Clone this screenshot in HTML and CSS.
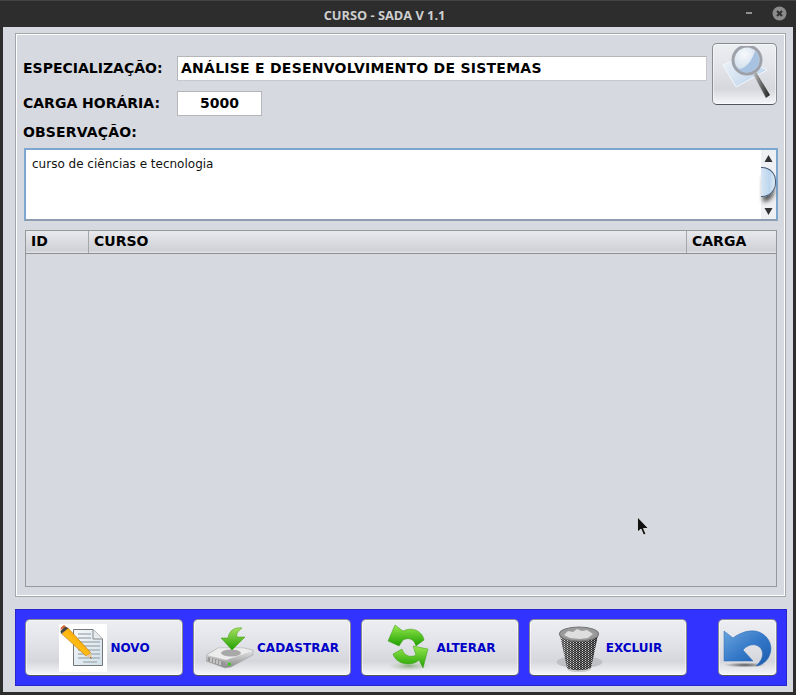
FILE: index.html
```html
<!DOCTYPE html>
<html lang="pt">
<head>
<meta charset="utf-8">
<title>CURSO - SADA V 1.1</title>
<link rel="stylesheet" href="styles.css">
</head>
<body>
<div class="window">
  <header class="titlebar">
    <span class="title">CURSO - SADA V 1.1</span>
    <span class="minimize"></span>
    <span class="close">
      <svg width="15" height="15" viewBox="0 0 15 15"><circle cx="7.5" cy="7.5" r="7" fill="#8b8b8b"/><path d="M5 5l5 5M10 5l-5 5" stroke="#2e2e2e" stroke-width="2"/></svg>
    </span>
  </header>
  <main class="client">
    <section class="panel">
      <div class="top">
        <div class="fields">
          <div class="row row-esp">
            <label class="label">ESPECIALIZAÇÃO:</label>
            <div class="input input-wide">ANÁLISE E DESENVOLVIMENTO DE SISTEMAS</div>
          </div>
          <div class="row row-carga">
            <label class="label">CARGA HORÁRIA:</label>
            <div class="input input-short">5000</div>
          </div>
        </div>
        <button class="btn search">
          <svg width="56" height="56" viewBox="0 0 56 56">
            <defs>
              <linearGradient id="pg" x1="0" y1="0" x2="1" y2="1"><stop offset="0" stop-color="#eef2f8"/><stop offset=".6" stop-color="#d0e0f0"/><stop offset="1" stop-color="#90c2ec"/></linearGradient>
              <radialGradient id="gl" cx=".4" cy=".3" r=".8"><stop offset="0" stop-color="#f6f9fc"/><stop offset=".6" stop-color="#d6e2ee"/><stop offset="1" stop-color="#a8c2de"/></radialGradient>
              <linearGradient id="hd" x1="0" y1="0" x2="1" y2="0"><stop offset="0" stop-color="#c4c4c4"/><stop offset=".5" stop-color="#666"/><stop offset="1" stop-color="#222"/></linearGradient>
            </defs>
            <path d="M6 19L24 11 50 24 19 41Z" fill="url(#pg)" stroke="#f4f6fa"/>
            <circle cx="30" cy="14" r="14" fill="url(#gl)" stroke="#9da2aa" stroke-width="3"/>
            <path d="M38 5a12 12 0 0 1 0 18 12 12 0 0 1-17 0c7 1 14-8 17-18z" fill="#a8c2e2"/>
            <path d="M36 28l3-2 14 23-4 3z" fill="url(#hd)"/>
          </svg>
        </button>
      </div>
      <div class="obs-label label">OBSERVAÇÃO:</div>
      <div class="textarea">
        <div class="textarea-text">curso de ciências e tecnologia</div>
        <div class="scrollbar">
          <svg class="arrow" width="9" height="9" viewBox="0 0 9 9"><path d="M4.5 1L8.5 8H.5Z" fill="#333"/></svg>
          <div class="thumb"></div>
          <svg class="arrow" width="9" height="9" viewBox="0 0 9 9"><path d="M4.5 8L.5 1H8.5Z" fill="#333"/></svg>
        </div>
      </div>
      <div class="table">
        <div class="thead">
          <div class="th th-id">ID</div>
          <div class="th th-curso">CURSO</div>
          <div class="th th-carga">CARGA</div>
        </div>
      </div>
    </section>
    <footer class="toolbar">
      <button class="btn action">
        <svg class="icon icon-white" width="48" height="48" viewBox="0 0 48 48">
          <defs><linearGradient id="doc" x1="0" y1="0" x2="1" y2="1"><stop offset="0" stop-color="#f6f8fa"/><stop offset="1" stop-color="#cfe0ea"/></linearGradient>
          <linearGradient id="pen" x1="0" y1="1" x2="1" y2="0"><stop offset="0" stop-color="#ffd040"/><stop offset=".5" stop-color="#ffb810"/><stop offset="1" stop-color="#e88800"/></linearGradient></defs>
          <path d="M14.500 5.500H34L43.500 15V41.500H14.500Z" fill="url(#doc)" stroke="#777"/>
          <path d="M34 5.500V15H43.500" fill="#e6ebef" stroke="#888"/>
          <path d="M19 10H32M19 14H32M19 18H41M19 22H41M19 26H41M19 30H41M19 34H41M24 38H38" stroke="#aab2b8" stroke-width="1.500"/>
          <path d="M3 10L9 4 32 29 27 32Z" fill="url(#pen)" stroke="#b87000" stroke-width=".6"/>
          <path d="M27 32L32 29 33 34.500Z" fill="#e8c89a"/>
          <path d="M31.500 33L33 34.500 31 34Z" fill="#502000"/>
          <path d="M2 10L1.500 7 6 2.500 9.500 4Z" fill="#444"/>
          <path d="M1.500 6L2 3.500 5 1 7 2.500Z" fill="#d86030"/>
        </svg>
        <span>NOVO</span>
      </button>
      <button class="btn action">
        <svg class="icon" width="48" height="48" viewBox="0 0 48 48">
          <defs><linearGradient id="drv" x1="0" y1="0" x2="0" y2="1"><stop offset="0" stop-color="#f2f2f2"/><stop offset="1" stop-color="#888"/></linearGradient>
          <linearGradient id="ga" x1="0" y1="0" x2="0" y2="1"><stop offset="0" stop-color="#a8e060"/><stop offset="1" stop-color="#20a000"/></linearGradient></defs>
          <path d="M0 31L12 24H38L47 26V31L25 43 19 44 0 37Z" fill="url(#drv)" stroke="#a8a8a8" stroke-width=".6"/>
          <path d="M1 31L20 36 46 27 37 24.500H13Z" fill="#ececec"/>
          <ellipse cx="25" cy="29" rx="10" ry="3.500" fill="#a8a8a8"/>
          <path d="M2 33L19 38V43L2 37Z" fill="#969696"/>
          <path d="M5 34V38M8 35V39M11 36V40M14 37V41" stroke="#eee"/>
          <circle cx="23.500" cy="40" r="1.600" fill="#30d010"/>
          <path d="M36 4C28 3 23 7 22 14H15L26 26 39 13H31C30 10 32 7 36 4Z" fill="url(#ga)" stroke="#3a9a10" stroke-width=".5"/>
        </svg>
        <span>CADASTRAR</span>
      </button>
      <button class="btn action">
        <svg class="icon" width="48" height="48" viewBox="0 0 48 48">
          <defs><linearGradient id="gr1" x1="0" y1="0" x2="0" y2="1"><stop offset="0" stop-color="#98e850"/><stop offset="1" stop-color="#1ea000"/></linearGradient>
          <radialGradient id="grs"><stop offset="0" stop-color="#8fae80"/><stop offset="1" stop-color="#c0c8c0" stop-opacity="0"/></radialGradient></defs>
          <ellipse cx="24" cy="42" rx="21" ry="5" fill="url(#grs)"/>
          <path d="M10 1L3 17 14 22 18 16C24 13 29 15 31 22L39 16C38 8 28 2 18 7Z" fill="url(#gr1)" stroke="#3a9a10" stroke-width=".5"/>
          <path d="M28 22L43 25 38 44 34 36C28 42 12 42 8 30L17 25C19 32 26 34 31 31Z" fill="url(#gr1)" stroke="#3a9a10" stroke-width=".5"/>
        </svg>
        <span>ALTERAR</span>
      </button>
      <button class="btn action">
        <svg class="icon" width="48" height="48" viewBox="0 0 48 48">
          <defs>
            <pattern id="mesh" width="3" height="2" patternUnits="userSpaceOnUse"><rect width="3" height="2" fill="#262626"/><rect width="1" height="1" fill="#d0d0d0"/><rect x="1.500" y="1" width="1" height="1" fill="#a8a8a8"/></pattern>
            <linearGradient id="trs" x1="0" y1="0" x2="1" y2="0"><stop offset="0" stop-color="#fff" stop-opacity=".2"/><stop offset=".5" stop-color="#fff" stop-opacity="0"/><stop offset="1" stop-color="#000" stop-opacity=".2"/></linearGradient>
          </defs>
          <ellipse cx="24.500" cy="38" rx="23" ry="6" fill="#bfc1c6"/>
          <path d="M5 11L12 44C16 48 31 48 36 44L43 11Z" fill="url(#mesh)"/>
          <path d="M5 11L12 44C16 48 31 48 36 44L43 11Z" fill="url(#trs)"/>
          <ellipse cx="24" cy="10" rx="19.500" ry="7" fill="#9a9a9a" stroke="#777" stroke-width="1.200"/>
          <path d="M9 11l4-4 5 1 4-3 5 2 5-1 6 4-5 4-8 1-10-1Z" fill="#dedede"/>
          <path d="M12 44C16 47 31 47 36 44L35.500 46C30 49 17 49 12.500 46Z" fill="#ccc"/>
        </svg>
        <span>EXCLUIR</span>
      </button>
      <button class="btn back">
        <svg width="50" height="48" viewBox="0 0 50 48">
          <defs><linearGradient id="bl" x1="0" y1="0" x2="1" y2="1"><stop offset="0" stop-color="#6aa4dc"/><stop offset=".5" stop-color="#3478c8"/><stop offset="1" stop-color="#1a5cae"/></linearGradient>
          <radialGradient id="sh"><stop offset="0" stop-color="#555"/><stop offset="1" stop-color="#666" stop-opacity="0"/></radialGradient></defs>
          <ellipse cx="22" cy="41" rx="21" ry="2.500" fill="url(#sh)"/>
          <path d="M1 7L10 14C18 8 28 5 36 8 46 12 50 22 47 30 45 37 39 41 33 42 37 38 41 33 39 27 37 20 27 18 20 26L30 37H1Z" fill="url(#bl)" stroke="#2a68b4" stroke-width=".5"/>
        </svg>
      </button>
    </footer>
  </main>
  <svg class="cursor" width="14" height="21" viewBox="0 0 14 21"><path d="M1.500 1V16L5 13 7.500 19 10 18 7.500 12.500H12.500Z" fill="#111" stroke="#eee" stroke-width=".8"/></svg>
</div>
</body>
</html>
```
FILE: styles.css
```css
* { box-sizing: border-box; }
html, body { margin: 0; padding: 0; }
body { width: 796px; height: 695px; background: #2d2d2d; overflow: hidden; font-family: "DejaVu Sans", sans-serif; }
.window { position: relative; width: 796px; height: 695px; display: flex; flex-direction: column; padding: 0 3px 3px; border-top: 1px solid #444; }
.titlebar { position: relative; height: 26px; flex: none; display: flex; align-items: center; justify-content: center; }
.title { font: bold 12.8px "Open Sans", sans-serif; color: #cfcfcf; margin-top: 2px; margin-right: 27px; }
.minimize { position: absolute; left: 743px; top: 11px; width: 6px; height: 2px; background: #8f8f8f; }
.close { position: absolute; left: 769px; top: 5px; height: 15px; }
.client { flex: 1; background: #d6d9df; padding: 6px 6px 6px 12px; display: flex; flex-direction: column; }
.panel { height: 564px; width: 771px; flex: none; border: 1px solid #a4a6aa; box-shadow: inset 0 0 0 1px #fff; padding: 8px 7px 0 7px; }
.top { display: flex; justify-content: space-between; height: 64px; }
.fields { display: flex; flex-direction: column; }
.row { display: flex; align-items: center; }
.row-esp { margin-top: 14px; }
.row-carga { margin-top: 10px; }
.label { width: 154px; font-size: 14px; font-weight: bold; color: #000; white-space: nowrap; padding-bottom: 2px; }
.input { height: 25px; background: #fff; border: 1px solid #b4b6ba; font-size: 14px; font-weight: bold; color: #000; display: flex; align-items: center; padding-bottom: 2px; }
.input-wide { width: 530px; padding-left: 3px; border-right-color: #c8c8cc; border-bottom-color: #c8c8cc; letter-spacing: .25px; }
.input-short { width: 85px; justify-content: center; }
.btn { display: flex; align-items: center; justify-content: center; padding: 0; border: 1px solid #8a8c90; border-bottom-color: #55565a; border-radius: 5px; background: linear-gradient(#eceef2 0%, #e2e4e9 40%, #d5d7dc 75%, #f6f7f9 100%); box-shadow: inset 0 0 0 1px rgba(255,255,255,.5); }
.search { width: 65px; height: 62px; margin-top: 1px; margin-right: 1px; margin-left: 5px; }
.obs-label { width: auto; margin-top: 18px; line-height: 16px; padding-bottom: 0; letter-spacing: .15px; }
.textarea { display: flex; height: 73px; width: 754px; margin-top: 8px; margin-left: 1px; border: 2px solid #7ba7d0; border-bottom-color: #8d9cb0; background: #fff; }
.textarea-text { flex: 1; padding: 7px 0 0 6px; font-size: 12px; line-height: 15px; color: #111; }
.scrollbar { width: 15px; flex: none; background: #eef0f3; display: flex; flex-direction: column; align-items: center; justify-content: space-between; padding: 4px 0 3px; }
.thumb { width: 15px; height: 30px; margin-top: -7px; background: linear-gradient(90deg, #d8e6f4, #bcd6ee 60%, #e0eaf4); border: 1px solid #445a78; border-left: none; border-radius: 0 14px 14px 0; box-shadow: 0 7px 4px -2px #555; }
.arrow { flex: none; }
.table { width: 752px; height: 357px; margin-top: 9px; margin-left: 2px; border: 1px solid #96989c; }
.thead { display: flex; height: 23px; border-bottom: 1px solid #8c8e92; background: linear-gradient(#e8e9ed, #d8dadf 55%, #cfd1d6 90%, #e6e7ea); }
.th { font-size: 14px; font-weight: bold; color: #000; padding-left: 5px; line-height: 20px; border-right: 1px solid #a4a6aa; }
.th-id { width: 63px; }
.th-curso { width: 598px; }
.th-carga { flex: 1; border-right: none; }
.toolbar { width: 772px; height: 77px; flex: none; margin-top: 12px; background: #3333ff; border: 1px solid #2626cc; padding: 9px 0 9px 9px; display: flex; gap: 10px; }
.action { width: 158px; height: 57px; gap: 3px; padding-left: 1px; color: #0000c8; font: bold 12px "DejaVu Sans", sans-serif; }
.icon { flex: none; display: block; }
.icon-white { background: #fff; }
.back { width: 59px; height: 57px; margin-left: 21px; }
.cursor { position: absolute; left: 636px; top: 515px; }
```
